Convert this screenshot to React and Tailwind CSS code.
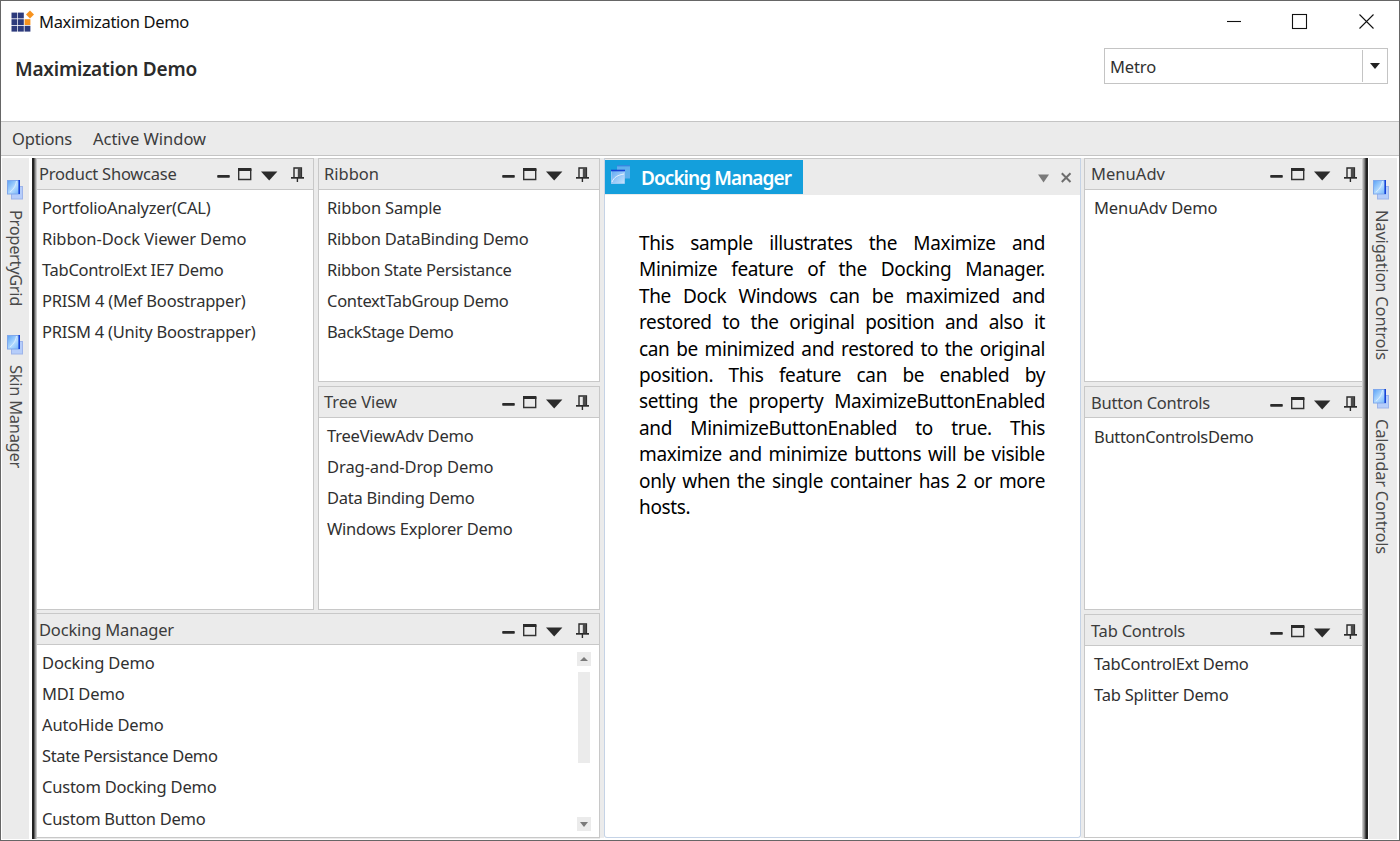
import React, { useLayoutEffect, useRef, useState } from "react";

// Text set to an exact length by spreading the difference over its letters.
function Fit({ w, vertical, className = "", children }) {
  const ref = useRef(null);
  const [spacing, setSpacing] = useState(0);
  useLayoutEffect(() => {
    const box = ref.current.getBoundingClientRect();
    const length = vertical ? box.height : box.width;
    setSpacing((w - length) / children.length);
  }, []);
  return (
    <span ref={ref} style={{ letterSpacing: spacing + "px" }} className={"inline-block whitespace-pre " + className}>
      {children}
    </span>
  );
}

function HeaderIcons() {
  return (
    <svg width="88" height="16" viewBox="0 0 88 16" className="shrink-0">
      <rect x="0.2" y="9" width="12.6" height="2.7" rx="0.8" fill="#2b2b2b" />
      <path d="M21.7 3V13.5H33.7V3" fill="none" stroke="#333" strokeWidth="1.4" />
      <rect x="21" y="2" width="13.4" height="3" fill="#2b2b2b" />
      <path d="M44 5.5H60.4L52.2 14.4Z" fill="#2b2b2b" />
      <path d="M77 11V2H84.4V11" fill="none" stroke="#2b2b2b" strokeWidth="1.4" />
      <rect x="80.8" y="2" width="3.4" height="9.4" fill="#4a4a4a" />
      <rect x="74" y="11" width="13" height="1.7" fill="#2b2b2b" />
      <rect x="79.7" y="12" width="1.4" height="4" fill="#2b2b2b" />
    </svg>
  );
}

function Panel({ title, w, items, className = "", pad = "pl-[8px]", head = "pl-[5px]", gap = "pr-[9px]", scroll }) {
  return (
    <section className={"flex flex-col border border-[#c8c8c8] bg-white " + className}>
      <header className={"flex h-[31px] shrink-0 items-center justify-between border-b border-[#c8c8c8] bg-[#ebebeb] " + head + " " + gap}>
        <Fit w={w} className="text-[16.5px] leading-[28px] text-[#3c3c3c]">{title}</Fit>
        <HeaderIcons />
      </header>
      <div className="flex min-h-0 flex-1 justify-between overflow-hidden">
        <ul className={"pt-[1.6px] " + pad}>
          {items.map(([text, width]) => (
            <li key={text} className="h-[31.2px] leading-[31px]">
              <Fit w={width - 1.5} className="text-[16.5px] text-[#303030]">{text}</Fit>
            </li>
          ))}
        </ul>
        {scroll && (
          <div className="mr-2 flex flex-col items-center pt-[7px] pb-[6px]">
            <div className="flex size-[14px] items-center justify-center bg-[#ebebeb]">
              <svg width="8" height="4"><path d="M0 4L4 0L8 4Z" fill="#7a7a7a" /></svg>
            </div>
            <div className="mt-[6px] h-[91px] w-3 bg-[#ebebeb]" />
            <div className="mt-auto flex size-[14px] items-center justify-center bg-[#ebebeb]">
              <svg width="8" height="5"><path d="M0 0H8L4 5Z" fill="#7a7a7a" /></svg>
            </div>
          </div>
        )}
      </div>
    </section>
  );
}

function WindowsIcon() {
  return (
    <svg width="17" height="20" viewBox="0 0 17 20" className="shrink-0">
      <defs>
        <linearGradient id="pane" x1="0" y1="0" x2="1" y2="1">
          <stop offset="0" stopColor="#5aa2f5" />
          <stop offset="0.55" stopColor="#b5dcff" />
          <stop offset="1" stopColor="#6fb0f8" />
        </linearGradient>
      </defs>
      <rect x="4.5" y="6.5" width="11" height="12.5" fill="#b6cdfa" stroke="#9db4ea" />
      <rect x="0.5" y="0.5" width="12" height="13.5" fill="url(#pane)" stroke="#7fa8ec" />
      <path d="M3 12C7 9 9 5 9.5 1" fill="none" stroke="#d8ecff" strokeWidth="1" />
      <path d="M12.2 0V14" stroke="#1542d6" strokeWidth="1.6" />
    </svg>
  );
}

function SideTab({ text, w, className }) {
  return (
    <div className={"flex flex-col items-center " + className}>
      <WindowsIcon />
      <Fit w={w} vertical className="mt-[9.5px] text-[16.5px] leading-[22px] text-[#4a4a4a] [writing-mode:vertical-rl]">{text}</Fit>
    </div>
  );
}

const product = [
  ["PortfolioAnalyzer(CAL)", 170],
  ["Ribbon-Dock Viewer Demo", 206],
  ["TabControlExt IE7 Demo", 183],
  ["PRISM 4 (Mef Boostrapper)", 205],
  ["PRISM 4 (Unity Boostrapper)", 215],
];
const ribbon = [
  ["Ribbon Sample", 116],
  ["Ribbon DataBinding Demo", 203],
  ["Ribbon State Persistance", 186],
  ["ContextTabGroup Demo", 183],
  ["BackStage Demo", 128],
];
const tree = [
  ["TreeViewAdv Demo", 148],
  ["Drag-and-Drop Demo", 168],
  ["Data Binding Demo", 149],
  ["Windows Explorer Demo", 187],
];
const docking = [
  ["Docking Demo", 114],
  ["MDI Demo", 84],
  ["AutoHide Demo", 123],
  ["State Persistance Demo", 177],
  ["Custom Docking Demo", 176],
  ["Custom Button Demo", 165],
];
const lines = [
  "This sample illustrates the Maximize and",
  "Minimize feature of the Docking Manager.",
  "The Dock Windows can be maximized and",
  "restored to the original position and also it",
  "can be minimized and restored to the original",
  "position. This feature can be enabled by",
  "setting the property MaximizeButtonEnabled",
  "and MinimizeButtonEnabled to true. This",
  "maximize and minimize buttons will be visible",
  "only when the single container has 2 or more",
];

export default function App() {
  return (
    <div className="flex h-[841px] w-[1400px] flex-col overflow-hidden border border-[#666] bg-white font-['Noto_Sans','Open_Sans',sans-serif]">
      <div className="flex h-[44px] items-start justify-between">
        <div className="flex items-start pl-[10px] pt-[9px]">
          <svg width="23" height="23" viewBox="0 0 23 23">
            <g fill="#2d3b7c">
              <rect x="0.5" y="2.6" width="5.8" height="5.8" /><rect x="7" y="2.6" width="5.8" height="5.8" />
              <rect x="0.5" y="9.2" width="5.8" height="5.8" /><rect x="7" y="9.2" width="5.8" height="5.8" />
              <rect x="0.5" y="15.8" width="5.8" height="5.8" /><rect x="7" y="15.8" width="5.8" height="5.8" /><rect x="13.6" y="15.8" width="5.8" height="5.8" />
            </g>
            <rect x="13.6" y="9.2" width="5.8" height="5.8" fill="#f7931e" />
            <path d="M19 0.5L23 4.5L19 8.5L15 4.5Z" fill="#f7931e" />
          </svg>
          <Fit w={150} className="ml-[5px] text-[16.5px] leading-[24px] text-[#111]">Maximization Demo</Fit>
        </div>
        <svg width="152" height="18" viewBox="0 0 152 18" className="mr-[25px] mt-[12px]" fill="none" stroke="#111" strokeWidth="1.1">
          <path d="M5 8.5H19" />
          <rect x="70.5" y="1.5" width="14" height="14" />
          <path d="M137.5 1.5L151.5 15.5M151.5 1.5L137.5 15.5" />
        </svg>
      </div>
      <div className="flex h-[76px] items-start justify-between pl-[14px] pr-[11px]">
        <Fit w={182} className="mt-[9px] text-[19px] font-semibold leading-[30px] text-[#2b2b2b]">Maximization Demo</Fit>
        <div className="mt-[3px] flex h-9 w-[284px] border border-[#c4c4c4] p-px">
          <div className="flex-1 pl-[4px] leading-[34px]">
            <Fit w={46} className="text-[16.5px] text-[#303030]">Metro</Fit>
          </div>
          <div className="flex w-[24px] items-center justify-center border-l border-[#c4c4c4]">
            <svg width="10" height="6" className="mb-px"><path d="M0 0H10L5 6Z" fill="#222" /></svg>
          </div>
        </div>
      </div>
      <nav className="flex h-[35px] shrink-0 items-center border-y border-[#c4c4c4] bg-[#ebebeb] pl-[11px] text-[16.5px] leading-[30px] text-[#3c3c3c]">
        <Fit w={60}>Options</Fit>
        <Fit w={113} className="ml-[21px]">Active Window</Fit>
      </nav>
      <main className="mt-[2px] flex h-[681px] shrink-0 pl-px">
        <aside className="flex w-[27px] flex-col items-center bg-[#ebebeb]">
          <SideTab text="PropertyGrid" w={96} className="mt-[22px] h-[155px]" />
          <SideTab text="Skin Manager" w={103} className="" />
        </aside>
        <div className="ml-[3px] w-[5px] bg-linear-to-r from-[#222] from-35% via-[#777] via-55% to-[#dedede]" />
        <div className="flex w-[563px] flex-col bg-[#ebebeb]">
          <div className="flex h-[452px] justify-between">
            <Panel title="Product Showcase" w={137.5} items={product} className="w-[277px] border-l-0" head="pl-0.5" pad="pl-[5px]" gap="pr-[8px]" />
            <div className="flex w-[282px] flex-col justify-between">
              <Panel title="Ribbon" w={55} items={ribbon} className="h-[224px]" />
              <Panel title="Tree View" w={73} items={tree} className="h-[224px]" />
            </div>
          </div>
          <Panel title="Docking Manager" w={135} items={docking} className="mt-[3px] h-[225px] border-l-0" head="pl-0.5 pt-px" pad="pl-[5px]" scroll />
        </div>
        <div className="h-[680px] w-1 bg-[#ebebeb]" />
        <section className="flex h-[680px] w-[477px] flex-col rounded-b-[3px] border border-t-[#c8c8c8] border-[#c5d3e6] bg-white">
          <div className="flex h-9 shrink-0 items-start justify-between bg-[#ebebeb] pt-px pr-[7px]">
            <div className="flex h-[34px] w-[198px] bg-[#149fdc]">
              <svg width="20" height="20" viewBox="0 0 20 20" className="ml-[6px] mt-[5px]">
                <defs>
                  <linearGradient id="doc" x1="0" y1="0" x2="1" y2="1">
                    <stop offset="0" stopColor="#62a9f3" />
                    <stop offset="1" stopColor="#c6e3fc" />
                  </linearGradient>
                </defs>
                <rect x="6" y="0.5" width="13" height="13" fill="#5fb0ec" />
                <path d="M6 0.8H19" stroke="#2f7be0" />
                <rect x="0.5" y="5.5" width="13" height="13" fill="url(#doc)" stroke="#a9cff5" strokeWidth="0.8" />
                <path d="M1 17C3 12 7 10 13 9" fill="none" stroke="#e6f3ff" />
                <path d="M0 5.5H14" stroke="#1542d6" strokeWidth="1.6" />
              </svg>
              <Fit w={150} className="ml-[10px] text-[19px] font-semibold leading-[36px] text-white">Docking Manager</Fit>
            </div>
            <svg width="36" height="12" viewBox="0 0 36 12" className="mt-[12px]">
              <path d="M1 2.5H12L6.5 10.5Z" fill="#7a7a7a" />
              <path d="M24.8 1.3L33.5 10M33.5 1.3L24.8 10" stroke="#6e6e6e" strokeWidth="2" />
            </svg>
          </div>
          <div className="ml-[34px] mt-[35px] w-[406px] text-[19px] leading-[26.4px] tracking-[-0.35px] text-black">
            {lines.map((line) => (
              <p key={line} className="whitespace-nowrap [text-align-last:justify]">{line}</p>
            ))}
            <p>hosts.</p>
          </div>
        </section>
        <div className="h-[680px] w-[3px] bg-[#ebebeb]" />
        <div className="flex h-[680px] w-[278px] flex-col justify-between bg-[#ebebeb]">
          <Panel title="MenuAdv" w={74} items={[["MenuAdv Demo", 125]]} className="h-[224px] border-r-0" gap="pr-[4px]" head="pl-[6px]" pad="pl-[9px]" />
          <Panel title="Button Controls" w={119} items={[["ButtonControlsDemo", 161]]} className="h-[224px] border-r-0" gap="pr-[4px]" head="pl-[6px] pt-px" pad="pl-[9px] mt-px" />
          <Panel title="Tab Controls" w={94} items={[["TabControlExt Demo", 156], ["Tab Splitter Demo", 136]]} className="h-[224px] border-r-0" gap="pr-[4px]" head="pl-[6px] pt-px" pad="pl-[9px]" />
        </div>
        <div className="w-[6px] bg-linear-to-l from-[#222] from-30% via-[#777] via-55% to-[#dedede]" />
        <aside className="ml-px flex w-[28px] flex-col items-center bg-[#ebebeb] pr-[3px]">
          <SideTab text="Navigation Controls" w={150} className="mt-[22px] h-[209px]" />
          <SideTab text="Calendar Controls" w={135} className="" />
        </aside>
      </main>
    </div>
  );
}
